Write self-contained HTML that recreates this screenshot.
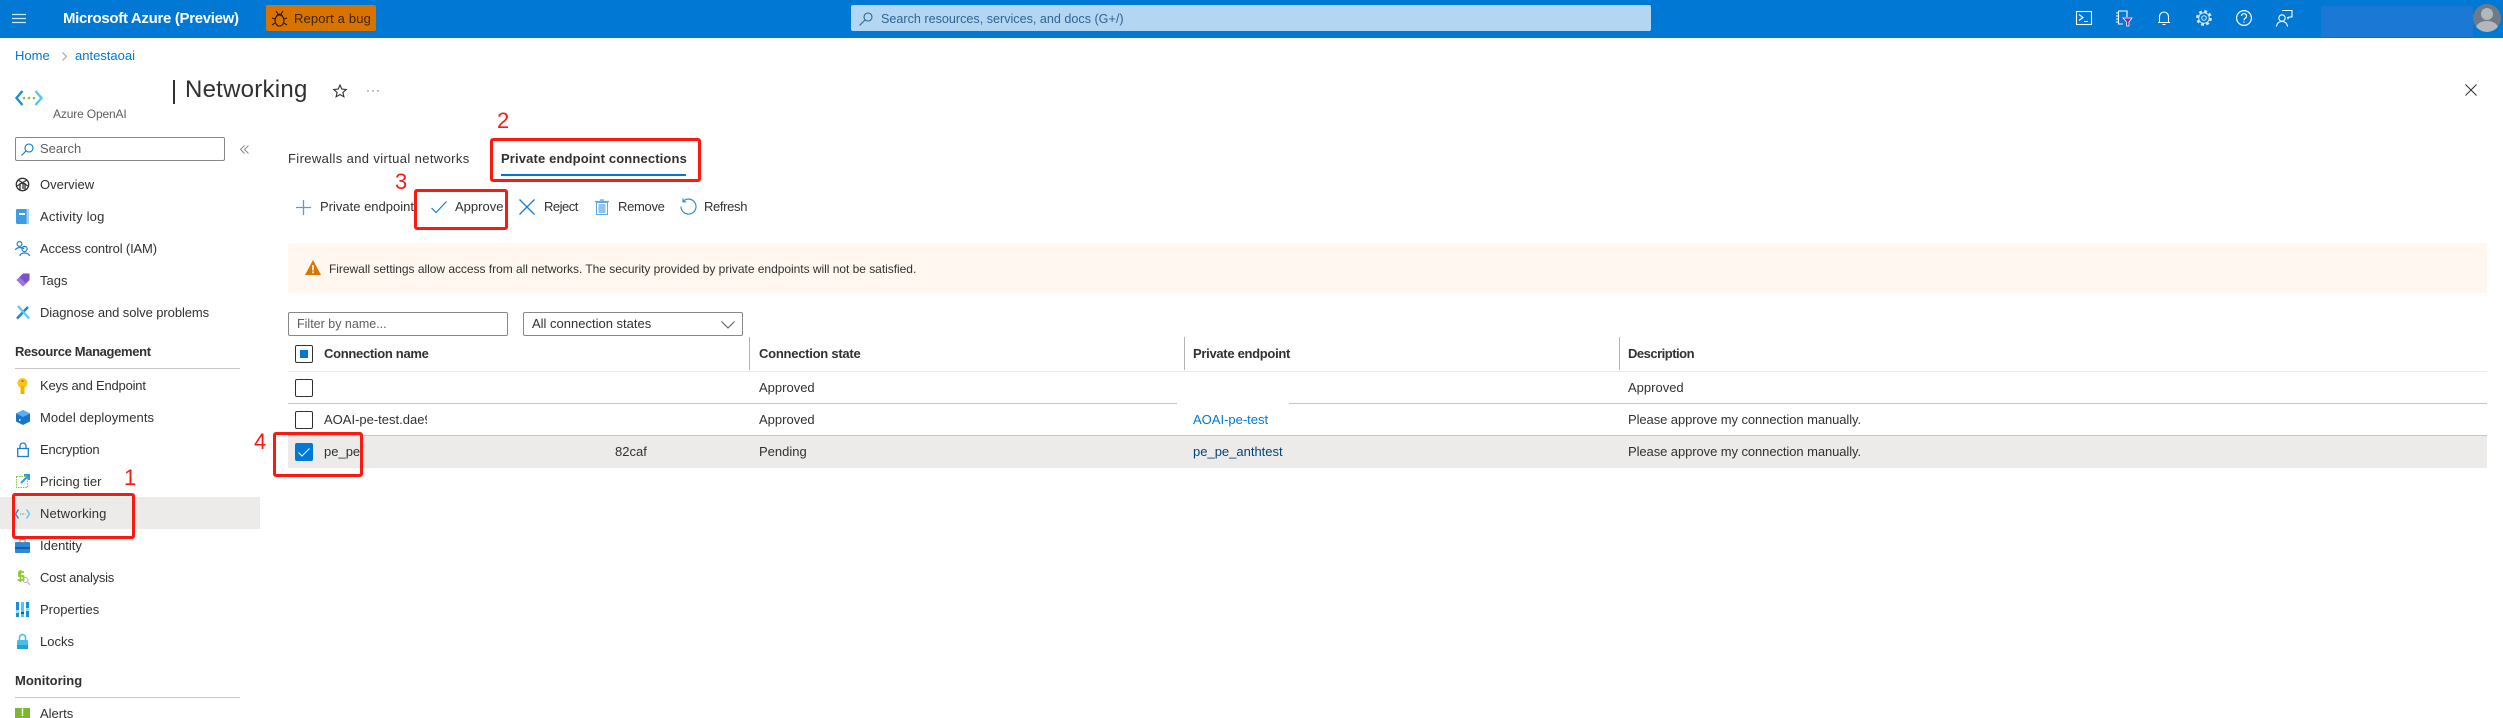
<!DOCTYPE html>
<html lang="en"><head><meta charset="utf-8"><title>Networking</title>
<style>
html,body{margin:0;padding:0;background:#fff;width:2503px;height:718px;overflow:hidden}
body{position:relative;font-family:"Liberation Sans",sans-serif;font-size:13px;color:#323130}
.t{position:absolute;white-space:nowrap;line-height:20px;height:20px}
.b{font-weight:bold}
.a{position:absolute}
.r{position:absolute;border:3px solid #fb1a10;border-radius:3px;box-sizing:border-box}
.n{position:absolute;color:#fb1a10;font-size:22px;line-height:24px}
.l{position:absolute;height:1px;background:#c8c6c4}
.v{position:absolute;width:1px;background:#b5b3b1}
.c{position:absolute;width:18px;height:18px;border:1px solid #323130;border-radius:2px;box-sizing:border-box;background:#fff}
svg{position:absolute;overflow:visible}
</style></head><body>
<div class="a" style="left:0;top:0;width:2503px;height:38px;background:#0078d4"></div>
<svg style="left:12px;top:14px" width="14" height="10"><path d="M0 .5H14M0 4.500H14M0 8.500H14" stroke="#cfe4f6" stroke-width="1.200"/></svg>
<div class="t" style="left:63px;top:9px;color:#fff;font-size:15px;font-weight:bold;letter-spacing:-.32px">Microsoft Azure (Preview)</div>
<div class="a" style="left:266px;top:5px;width:110px;height:26px;background:#d97300;border-radius:2px"></div>
<svg style="left:272px;top:10px" width="15" height="17" fill="none" stroke="#2b1a00" stroke-width="1.100"><ellipse cx="7.500" cy="10.500" rx="4.500" ry="5.500"/><path d="M4.500 5.500Q7.500 3 10.500 5.500M4 1l2 3M11 1L9 4M0 8l3 1M15 8l-3 1M0 15l3-2M15 15l-3-2"/></svg>
<div class="t" style="left:294px;top:9px;color:#3b2600;letter-spacing:.15px">Report a bug</div>
<div class="a" style="left:851px;top:5px;width:800px;height:26px;background:#b3d6f2;border-radius:2px"></div>
<svg style="left:859px;top:12px" width="14" height="14" fill="none" stroke="#2f6496" stroke-width="1.100"><circle cx="9" cy="5" r="4"/><path d="M6 8L.5 13.500"/></svg>
<div class="t" style="left:881px;top:9px;color:#2f6496;font-size:12.600px">Search resources, services, and docs (G+/)</div>

<svg style="left:2076px;top:11px" width="16" height="14" fill="none" stroke="#fff" stroke-width="1.100"><rect x=".5" y=".5" width="15" height="13"/><path d="M3 3.500l4 3-4 3M8 10.500h4"/></svg>
<svg style="left:2116px;top:10px" width="17" height="17" fill="none" stroke="#fff" stroke-width="1.100"><path d="M2.500 1H11V7M2.500 1V14H7M0 3h2.500M0 6h2.500M0 9h2.500M0 12h2.500"/><path d="M7 8H16L13 12V16H10.500V12Z" fill="#7a2aa0" stroke="#fff" stroke-width=".8"/></svg>
<svg style="left:2158px;top:11px" width="12" height="15" fill="none" stroke="#fff" stroke-width="1.100"><path d="M0 11.500H12M1.500 11.500V5.500a4.500 4.500 0 0 1 9 0V11.500M4.500 13.500h3"/></svg>
<svg style="left:2196px;top:10px" width="16" height="16"><circle cx="8" cy="8" r="6.700" fill="none" stroke="#d6e9f8" stroke-width="2.400" stroke-dasharray="2.900 2.360"/><circle cx="8" cy="8" r="5.800" fill="#d6e9f8"/><circle cx="8" cy="8" r="4.800" fill="#0078d4"/><circle cx="8" cy="8" r="2.300" fill="none" stroke="#d6e9f8"/></svg>
<svg style="left:2236px;top:10px" width="16" height="16" fill="none" stroke="#fff" stroke-width="1.200"><circle cx="8" cy="8" r="7.400"/><path d="M5.500 6a2.500 2.500 0 1 1 4 2c-1 .7-1.500 1-1.500 2.200M8 11.500v1.200"/></svg>
<svg style="left:2276px;top:10px" width="17" height="17" fill="none" stroke="#fff" stroke-width="1.100"><path d="M6 .5H16V7H13L12 8.500 11.500 7"/><circle cx="6" cy="8" r="3.200"/><path d="M.5 16.500C1 13 3 11.500 6 11.500S11 13 11.500 16.500"/></svg>
<div class="a" style="left:2321px;top:6px;width:152px;height:31px;background:#1c78d5"></div>
<div class="a" style="left:2473px;top:4px;width:28px;height:28px;border-radius:50%;background:#6c7a89;overflow:hidden"><div class="a" style="left:8px;top:4px;width:12px;height:12px;border-radius:50%;background:#b4b7ba"></div><div class="a" style="left:3px;top:17px;width:22px;height:14px;border-radius:50%;background:#b4b7ba"></div></div>

<div class="t" style="left:15px;top:46px;color:#0078d4">Home</div>
<svg style="left:62px;top:52px" width="5" height="9" fill="none" stroke="#a19f9d"><path d="M.5.500l4 4-4 4"/></svg>
<div class="t" style="left:75px;top:46px;color:#0078d4">antestaoai</div>

<svg style="left:15px;top:90px" width="28" height="16" fill="none" stroke-width="2.400"><path d="M7.500 1L1.500 8l6 7" stroke="#1a8fd8"/><path d="M20.500 1l6 7-6 7" stroke="#50c8f0"/><circle cx="9" cy="8" r="1.300" fill="#86c440" stroke="none"/><circle cx="14" cy="8" r="1.300" fill="#86c440" stroke="none"/><circle cx="19" cy="8" r="1.300" fill="#86c440" stroke="none"/></svg>
<div class="t" style="left:53px;top:104px;color:#605e5c;font-size:12px;letter-spacing:-.15px">Azure OpenAI</div>
<div class="a" style="left:173px;top:80px;width:2px;height:24px;background:#323130"></div>
<div class="t" style="left:185px;top:75px;font-size:24px;line-height:30px;height:30px;letter-spacing:.25px;color:#323130">Networking</div>
<svg style="left:333px;top:84px" width="14" height="14" fill="none" stroke="#323130" stroke-width="1.100"><path d="M7 1l1.800 4.100 4.400.4-3.300 2.900 1 4.400L7 10.500 3.100 12.800l1-4.400L.8 5.500l4.400-.4z"/></svg>
<div class="t" style="left:366px;top:80px;color:#605e5c;font-size:12px;letter-spacing:1px">···</div>
<svg style="left:2465px;top:84px" width="12" height="12" fill="none" stroke="#323130"><path d="M.5.500l11 11M11.500.500l-11 11"/></svg>

<div class="a" style="left:15px;top:137px;width:210px;height:24px;border:1px solid #8a8886;border-radius:2px;box-sizing:border-box"></div>
<svg style="left:21px;top:143px" width="13" height="13" fill="none" stroke="#0078d4" stroke-width="1.100"><circle cx="8" cy="5" r="4"/><path d="M5 8L.5 12.500"/></svg>
<div class="t" style="left:40px;top:139px;color:#605e5c">Search</div>
<svg style="left:240px;top:145px" width="9" height="9" fill="none" stroke="#8a8886"><path d="M4.500.5L.5 4.500l4 4M8.500.5l-4 4 4 4"/></svg>

<svg style="left:15px;top:177px" width="15" height="15" fill="none" stroke="#323130" stroke-width="1.300"><circle cx="7.500" cy="7.500" r="6.200"/><path d="M3 3l5 3v6M12 3L7 6M2 9l5-3M13 9L8 6M5 13V6M10 13V6"/></svg>
<div class="t" style="left:40px;top:175px">Overview</div>
<svg style="left:16px;top:209px" width="13" height="15"><rect width="13" height="15" rx="1.500" fill="#3b9ce8"/><rect x="10.500" width="2.500" height="15" fill="#9fd1f5"/><rect x="3" y="4" width="6" height="2" fill="#fff"/></svg>
<div class="t" style="left:40px;top:207px;letter-spacing:.2px">Activity log</div>
<svg style="left:15px;top:241px" width="15" height="15" fill="none" stroke="#1a7fd8" stroke-width="1.200"><circle cx="4.500" cy="3" r="2.400"/><path d="M.5 9C1 6 8 6 9 8"/><circle cx="9.500" cy="8" r="2.600"/><path d="M5 15c0-4 9-4 9.500 0"/></svg>
<div class="t" style="left:40px;top:239px;letter-spacing:-.15px">Access control (IAM)</div>
<svg style="left:16px;top:273px" width="14" height="14"><path d="M7 .5h6.500V7L7 13.500.5 7z" fill="#7b52c8"/><path d="M.5 7L7 13.500l3-3-6.500-6.500z" fill="#9b76dd"/></svg>
<div class="t" style="left:40px;top:271px">Tags</div>
<svg style="left:16px;top:305px" width="14" height="14" fill="none" stroke-width="2.400"><path d="M1 13.500L12 2" stroke="#1e87c4"/><path d="M2 1l11 12.500" stroke="#5fc9ee"/></svg>
<div class="t" style="left:40px;top:303px;letter-spacing:-.08px">Diagnose and solve problems</div>

<div class="t b" style="left:15px;top:342px;letter-spacing:-.35px">Resource Management</div>
<div class="l" style="left:15px;top:368px;width:225px"></div>
<svg style="left:17px;top:378px" width="11" height="16"><circle cx="5.500" cy="5" r="5" fill="#fcc419"/><rect x="3.500" y="8" width="4" height="8" fill="#f5b000"/><rect x="4.500" y="2" width="2" height="2" fill="#b08010"/></svg>
<div class="t" style="left:40px;top:376px;letter-spacing:-.2px">Keys and Endpoint</div>
<svg style="left:16px;top:410px" width="14" height="15"><path d="M7 0l7 3.500v8L7 15 0 11.500v-8z" fill="#1a74c8"/><path d="M7 0l7 3.500-7 3.500-7-3.500z" fill="#5ab1ef"/><rect x="3" y="9" width="1.500" height="2" fill="#cfe8fb"/></svg>
<div class="t" style="left:40px;top:408px;letter-spacing:.08px">Model deployments</div>
<svg style="left:17px;top:442px" width="12" height="15" fill="none" stroke="#1a7fd8" stroke-width="1.300"><rect x=".7" y="6.500" width="10.600" height="8"/><path d="M3 6.500V4a3 3 0 0 1 6 0v2.500"/></svg>
<div class="t" style="left:40px;top:440px;letter-spacing:-.2px">Encryption</div>
<svg style="left:16px;top:474px" width="14" height="14" fill="none"><rect x=".5" y="2.500" width="11" height="11" stroke="#86c440" stroke-dasharray="1.500 1"/><path d="M5 9L13 1M8 1h5v5" stroke="#2e9be6" stroke-width="2"/></svg>
<div class="t" style="left:40px;top:472px">Pricing tier</div>
<div class="a" style="left:0;top:497px;width:260px;height:32px;background:#edebe9"></div>
<svg style="left:15px;top:509px" width="15" height="10" fill="none" stroke-width="1.400"><path d="M3.500.5L.5 5l3 4.500" stroke="#1a8fd8"/><path d="M11.500.5l3 4.500-3 4.500" stroke="#50c8f0"/><path d="M5 5h5.500" stroke="#86c440" stroke-dasharray="1.300 1.200"/></svg>
<div class="t" style="left:40px;top:504px;letter-spacing:.15px">Networking</div>
<svg style="left:15px;top:539px" width="15" height="14"><rect y="3" width="15" height="11" rx="1" fill="#2f87dc"/><rect y="8" width="15" height="2" fill="#155fa8"/><rect x="5" y=".5" width="5" height="3" fill="none" stroke="#6d8ba8"/></svg>
<div class="t" style="left:40px;top:536px">Identity</div>
<svg style="left:16px;top:570px" width="14" height="16" fill="none"><path d="M8 2H3v4h4.500v4H1.500M4.500 0v12" stroke="#8ccb2f" stroke-width="1.800"/><circle cx="9.500" cy="10" r="2.500" stroke="#b0b0b0"/><path d="M11.500 12l2.500 3" stroke="#b0b0b0"/></svg>
<div class="t" style="left:40px;top:568px;letter-spacing:-.25px">Cost analysis</div>
<svg style="left:16px;top:602px" width="13" height="15"><rect width="3" height="15" fill="#1a8fd8"/><rect x="5" width="3" height="15" fill="#50c8f0"/><rect x="10" width="3" height="15" fill="#1a8fd8"/><rect y="8" width="3" height="3" fill="#8fe0f8"/><rect x="5" y="10" width="3" height="2" fill="#0d5ca8"/><rect x="10" y="6" width="3" height="3" fill="#8fe0f8"/></svg>
<div class="t" style="left:40px;top:600px">Properties</div>
<svg style="left:17px;top:634px" width="11" height="15"><rect y="6" width="11" height="9" rx="1" fill="#42c0e8"/><path d="M2.500 7V3.500a3 3 0 0 1 6 0V7" fill="none" stroke="#42c0e8" stroke-width="1.600"/><rect y="11" width="11" height="4" fill="#1fa3cf"/></svg>
<div class="t" style="left:40px;top:632px">Locks</div>
<div class="t b" style="left:15px;top:671px">Monitoring</div>
<div class="l" style="left:15px;top:697px;width:225px"></div>
<div class="a" style="left:15px;top:708px;width:15px;height:10px;background:#7cb82f;color:#fff;text-align:center;font:bold 11px/10px 'Liberation Sans',sans-serif">!</div>
<div class="t" style="left:40px;top:704px">Alerts</div>

<div class="t" style="left:288px;top:149px;letter-spacing:.37px">Firewalls and virtual networks</div>
<div class="t b" style="left:501px;top:149px;letter-spacing:.14px">Private endpoint connections</div>
<div class="a" style="left:501px;top:174px;width:185px;height:2px;background:#0078d4"></div>

<svg style="left:296px;top:200px" width="15" height="15" fill="none" stroke="#4aa0e6" stroke-width="1.300"><path d="M7.500 0v15M0 7.500h15"/></svg>
<div class="t" style="left:320px;top:197px">Private endpoint</div>
<svg style="left:431px;top:201px" width="16" height="12" fill="none" stroke="#1a7fd8" stroke-width="1.200"><path d="M.5 7l4.500 4.500L15.500.5"/></svg>
<div class="t" style="left:455px;top:197px">Approve</div>
<svg style="left:519px;top:199px" width="16" height="16" fill="none" stroke="#1a7fd8" stroke-width="1.300"><path d="M.5.500l15 15M15.500.500l-15 15"/></svg>
<div class="t" style="left:544px;top:197px;letter-spacing:-.5px">Reject</div>
<svg style="left:595px;top:199px" width="14" height="16" fill="none"><path d="M0 2.500h14M5 1h4" stroke="#5ea9e6" stroke-width="1.300"/><rect x="1.500" y="3.500" width="11" height="12" stroke="#5ea9e6"/><rect x="3.500" y="5" width="7" height="9" fill="#8fc4ee"/></svg>
<div class="t" style="left:618px;top:197px;letter-spacing:-.3px">Remove</div>
<svg style="left:680px;top:198px" width="17" height="17" fill="none" stroke="#2e8fdf" stroke-width="1.200"><path d="M3 3.500A7.500 7.500 0 1 1 1 8.500M3 .5v3.300h3.300"/></svg>
<div class="t" style="left:704px;top:197px;letter-spacing:-.35px">Refresh</div>

<div class="a" style="left:288px;top:243px;width:2199px;height:50px;background:#fff7f0;border-radius:2px"></div>
<svg style="left:305px;top:260px" width="16" height="15"><path d="M8 0l8 15H0z" fill="#db7500"/><rect x="7.200" y="5" width="1.600" height="5.500" fill="#fff"/><rect x="7.200" y="11.500" width="1.600" height="1.700" fill="#fff"/></svg>
<div class="t" style="left:329px;top:259px;font-size:12px;letter-spacing:-.03px">Firewall settings allow access from all networks. The security provided by private endpoints will not be satisfied.</div>

<div class="a" style="left:288px;top:312px;width:220px;height:24px;border:1px solid #8a8886;border-radius:2px;box-sizing:border-box"></div>
<div class="t" style="left:297px;top:314px;font-size:12.500px;color:#605e5c">Filter by name...</div>
<div class="a" style="left:523px;top:312px;width:220px;height:24px;border:1px solid #8a8886;border-radius:2px;box-sizing:border-box"></div>
<div class="t" style="left:532px;top:314px">All connection states</div>
<svg style="left:721px;top:321px" width="14" height="8" fill="none" stroke="#605e5c" stroke-width="1.100"><path d="M.5.500L7 7l6.500-6.500"/></svg>

<div class="c" style="left:295px;top:345px"></div><div class="a" style="left:300px;top:350px;width:8px;height:8px;background:#0078d4"></div>
<div class="t b" style="left:324px;top:344px;letter-spacing:-.3px">Connection name</div>
<div class="v" style="left:749px;top:337px;height:33px"></div>
<div class="t b" style="left:759px;top:344px;letter-spacing:-.25px">Connection state</div>
<div class="v" style="left:1184px;top:337px;height:33px"></div>
<div class="t b" style="left:1193px;top:344px;letter-spacing:-.3px">Private endpoint</div>
<div class="v" style="left:1619px;top:337px;height:33px"></div>
<div class="t b" style="left:1628px;top:344px;letter-spacing:-.5px">Description</div>
<div class="l" style="left:288px;top:371px;width:2199px;background:#edebe9"></div>

<div class="c" style="left:295px;top:379px"></div>
<div class="t" style="left:759px;top:378px">Approved</div>
<div class="t" style="left:1628px;top:378px">Approved</div>
<div class="l" style="left:288px;top:403px;width:889px"></div>
<div class="l" style="left:1289px;top:403px;width:1198px"></div>

<div class="c" style="left:295px;top:411px"></div>
<div class="a" style="left:324px;top:410px;width:103px;height:20px;overflow:hidden"><div class="t" style="left:0;top:0">AOAI-pe-test.dae9</div></div>
<div class="t" style="left:759px;top:410px">Approved</div>
<div class="t" style="left:1193px;top:410px;color:#0078d4">AOAI-pe-test</div>
<div class="t" style="left:1628px;top:410px;letter-spacing:-.08px">Please approve my connection manually.</div>
<div class="l" style="left:288px;top:435px;width:2199px"></div>

<div class="a" style="left:288px;top:436px;width:2199px;height:32px;background:#edebe9"></div>
<div class="a" style="left:295px;top:443px;width:18px;height:18px;background:#0078d4;border-radius:2px"></div>
<svg style="left:298px;top:448px" width="12" height="9" fill="none" stroke="#fff" stroke-width="1"><path d="M.5 4.500l3.500 3.500L11.500.5"/></svg>
<div class="a" style="left:324px;top:442px;width:36px;height:20px;overflow:hidden"><div class="t" style="left:0;top:0">pe_pe_</div></div>
<div class="t" style="left:615px;top:442px">82caf</div>
<div class="t" style="left:759px;top:442px">Pending</div>
<div class="t" style="left:1193px;top:442px;color:#004578">pe_pe_anthtest</div>
<div class="t" style="left:1628px;top:442px;letter-spacing:-.08px">Please approve my connection manually.</div>

<div class="r" style="left:12px;top:493px;width:123px;height:46px"></div>
<div class="n" style="left:124px;top:466px">1</div>
<div class="r" style="left:490px;top:138px;width:211px;height:44px"></div>
<div class="n" style="left:497px;top:109px">2</div>
<div class="r" style="left:414px;top:189px;width:94px;height:41px"></div>
<div class="n" style="left:395px;top:170px">3</div>
<div class="r" style="left:273px;top:432px;width:90px;height:45px"></div>
<div class="n" style="left:254px;top:430px">4</div>
</body></html>
